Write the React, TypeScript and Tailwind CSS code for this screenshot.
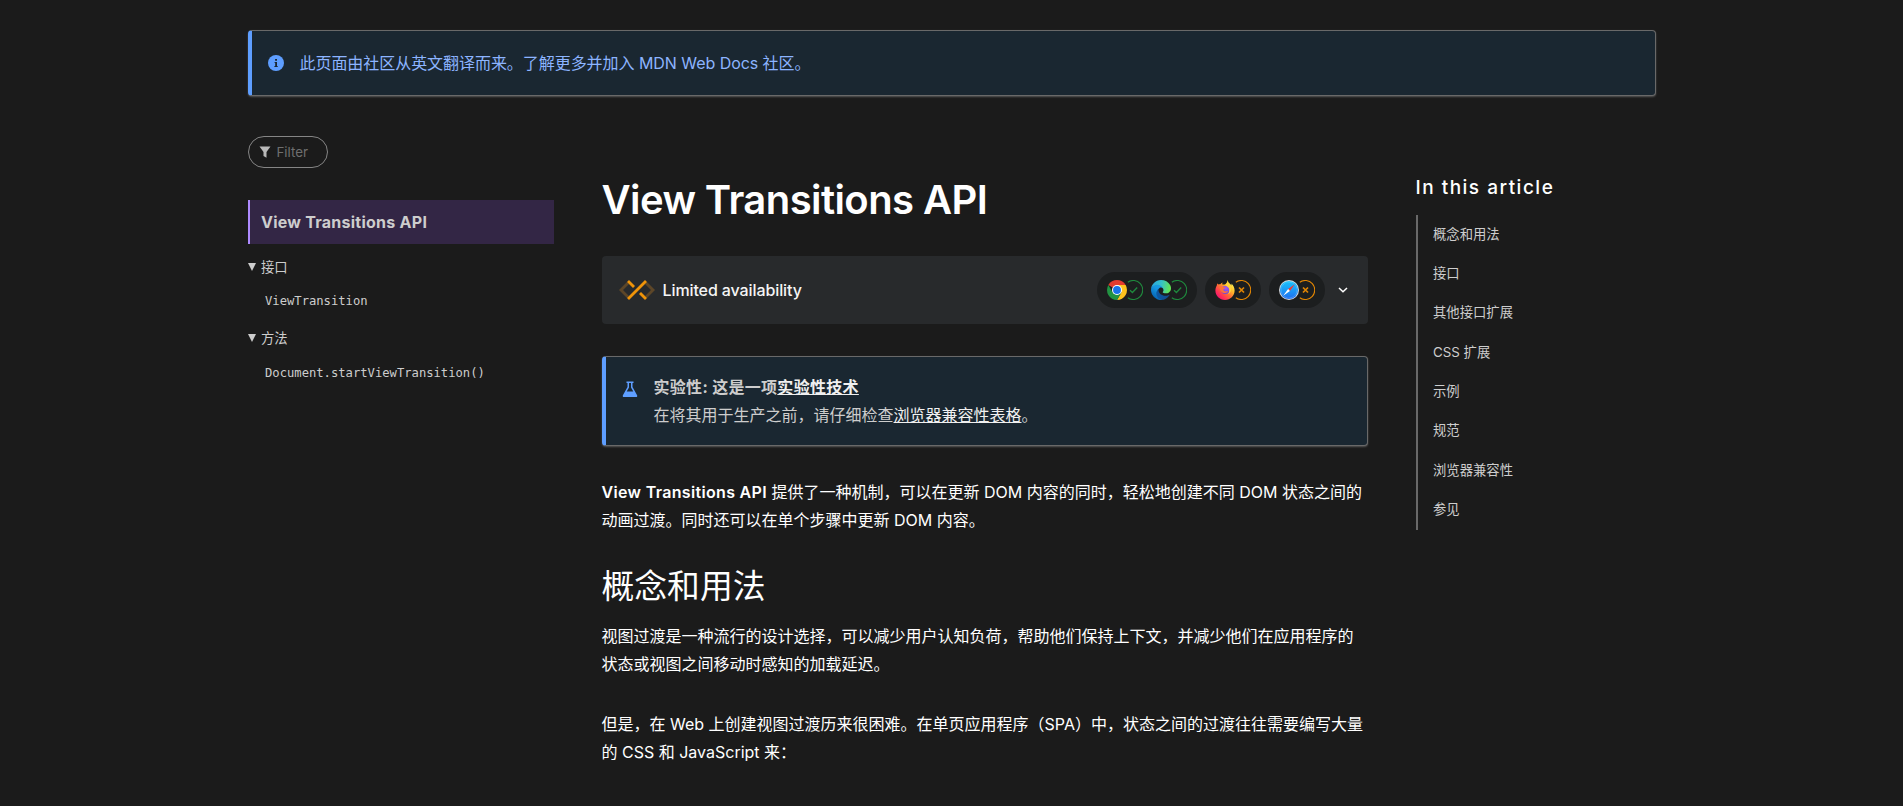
import React from "react";

const toc = ["概念和用法", "接口", "其他接口扩展", "CSS 扩展", "示例", "规范", "浏览器兼容性", "参见"];

function InfoIcon() {
  return (
    <svg viewBox="0 0 16 16" className="size-4 shrink-0">
      <circle cx="8" cy="8" r="8" fill="#5e9eff" />
      <path d="M7.1 4h1.9v1.8H7.1zM6.6 7h2.4v4h.7v1H6.4v-1h.8V8h-.6z" fill="#1a2731" />
    </svg>
  );
}

function FlaskIcon() {
  return (
    <svg viewBox="0 0 16 16" className="mt-2 size-4 shrink-0">
      <path
        fillRule="evenodd"
        fill="#5e9eff"
        d="M4.500 .500h7V2h-1v4l4.600 8.200c.5.9 0 1.800-1 1.800H1.900c-1 0-1.500-.9-1-1.800L5.500 6V2h-1zM7 2v4.400L4.700 10.500h6.600L9 6.400V2z"
      />
    </svg>
  );
}

function LimitedIcon() {
  return (
    <svg viewBox="0 0 540 300" className="h-5 w-9 shrink-0">
      <g fill="#5d4628">
        <path d="M420 30L540 150L420 270L390 240L480 150L390 60L420 30Z" />
        <path d="M120 30L150 60L60 150L150 240L120 270L0 150L120 30Z" />
      </g>
      <g fill="#f09409">
        <path d="M150 0L240 90L210 120L120 30L150 0Z" />
        <path d="M330 180L300 210L390 300L420 270L330 180Z" />
        <path d="M390 0L420 30L150 300L120 270L390 0Z" />
      </g>
    </svg>
  );
}

function ChromeIcon() {
  return (
    <svg viewBox="0 0 20 20" className="size-5">
      <path d="M10 10L1.340 5A10 10 0 0 1 18.660 5Z" fill="#e33b2e" />
      <path d="M10 5H18.660A10 10 0 0 1 10 20L14.330 12.500Z" fill="#fcc31e" />
      <path d="M1.340 5A10 10 0 0 0 10 20L14.330 12.500L10 14.500L5.670 12.500Z" fill="#229342" />
      <circle cx="10" cy="10" r="5" fill="#fff" />
      <circle cx="10" cy="10" r="3.950" fill="#1a73e8" />
    </svg>
  );
}

function EdgeIcon() {
  return (
    <svg viewBox="0 0 256 256" className="size-5">
      <defs>
        <linearGradient id="edge-dark" x1="60" y1="178" x2="236" y2="178" gradientUnits="userSpaceOnUse">
          <stop offset="0" stopColor="#0c59a4" />
          <stop offset="1" stopColor="#114a8b" />
        </linearGradient>
        <linearGradient id="edge-blue" x1="140" y1="80" x2="40" y2="220" gradientUnits="userSpaceOnUse">
          <stop offset="0" stopColor="#1b9de2" />
          <stop offset=".4" stopColor="#1595df" />
          <stop offset="1" stopColor="#0666b8" />
        </linearGradient>
        <linearGradient id="edge-green" x1="10" y1="60" x2="240" y2="110" gradientUnits="userSpaceOnUse">
          <stop offset="0" stopColor="#2aa7df" />
          <stop offset=".5" stopColor="#36c2c8" />
          <stop offset="1" stopColor="#62e556" />
        </linearGradient>
      </defs>
      <path fill="url(#edge-dark)" d="M231 190.500c-3.400 1.800-6.900 3.400-10.500 4.700a101.500 101.500 0 0 1-35.900 6.500c-47.300 0-88.500-32.500-88.500-74.300 .1-11.400 6.400-21.900 16.400-27.300-42.800 1.800-53.800 46.400-53.800 72.500 0 73.900 68.100 81.400 82.800 81.400 7.900 0 19.800-2.300 27-4.600l1.300-.4c27.600-9.500 51-28.100 66.600-52.800a4 4 0 0 0-5.400-5.700z" />
      <path fill="url(#edge-blue)" d="M105.700 241.400a79.200 79.200 0 0 1-22.700-21.300 80.700 80.700 0 0 1 29.500-120c3.100-1.500 8.500-4.100 15.600-4a32.400 32.400 0 0 1 25.700 13 31.900 31.900 0 0 1 6.300 18.700c0-.2 24.500-79.600-80-79.600-43.900 0-80 41.700-80 78.200a130 130 0 0 0 12.100 56 128 128 0 0 0 156.400 67 75.500 75.500 0 0 1-62.800-8z" />
      <path fill="url(#edge-green)" d="M152.300 148.900c-.8 1-3.300 2.500-3.300 5.700 0 2.600 1.700 5.100 4.700 7.200 14.400 10 41.500 8.700 41.600 8.700 10.700 0 21.100-2.900 30.300-8.300 18.800-11 30.400-31.200 30.400-53 .3-22.400-8-37.300-11.300-43.900C223.500 23.900 177.700 0 128 0 57.300 0 0 56.700 0 127.700c.5-36.400 36.600-65.800 80-65.800 3.500 0 23.500.3 42 10.100 16.300 8.600 24.900 18.900 30.800 29.200 6.200 10.700 7.300 24.100 7.300 29.500 0 5.300-2.700 13.300-7.800 18.200z" />
    </svg>
  );
}

function FirefoxIcon() {
  return (
    <svg viewBox="0 0 20 20" className="size-5">
      <defs>
        <linearGradient id="fx-body" x1="17" y1="3" x2="3" y2="18" gradientUnits="userSpaceOnUse">
          <stop offset="0" stopColor="#fff44f" />
          <stop offset=".3" stopColor="#ffb52a" />
          <stop offset=".55" stopColor="#ff6a36" />
          <stop offset=".8" stopColor="#ff3058" />
          <stop offset="1" stopColor="#f0146e" />
        </linearGradient>
        <radialGradient id="fx-core" cx="11" cy="8" r="6" gradientUnits="userSpaceOnUse">
          <stop offset="0" stopColor="#a45bf5" />
          <stop offset="1" stopColor="#6a45e0" />
        </radialGradient>
      </defs>
      <path
        fill="url(#fx-body)"
        d="M12.600 0c.3 2 1.400 3 2.800 4.200.5.4 1 .9 1.300 1.400-.1-.9-.3-1.500-.6-2.100 2.200 1.600 3.500 4.100 3.500 7.100 0 5.200-4.200 9.400-9.600 9.400S.400 15.800.400 10.600c0-2 .5-3.500 1.300-4.900.1-.9.400-1.700 1-2.500.1.500.3.900.6 1.200.6-.3 1.300-.3 2-.1C5.800 3.500 6.600 2.800 7.700 2.500 7.300 3 7.100 3.800 7.300 4.400c.8.1 1.500.1 2.300.1C11.600 3.700 12.400 2 12.600 0z"
      />
      <circle cx="10.300" cy="10" r="4.100" fill="url(#fx-core)" />
      <path d="M4.600 6.700c1.400-.9 3-.5 4 .5l1.900.2c-.2 1-1.400 1.400-2.100 1.800-.2 1.400.8 2.300 2.300 2.200 1-.1 1.600-.7 2.600-.4-.8 1.500-2.300 2.300-4 2.100-2.800-.3-4.600-2.800-4.700-6.400z" fill="#ff7139" />
      <path d="M12.600 0c.2 3-2 3.600-1.600 5.200.4 1.200 2.700 1.500 3.300 4.200.4 2.200-.5 3.900-1.700 4.800 2.800-.9 4.100-3.600 3.500-6.200-.5-2.500-3.300-3.600-3.500-8z" fill="#ffd43b" />
    </svg>
  );
}

function SafariIcon() {
  return (
    <svg viewBox="0 0 20 20" className="size-5">
      <defs>
        <linearGradient id="sf-dial" x1="10" y1="1" x2="10" y2="19" gradientUnits="userSpaceOnUse">
          <stop offset="0" stopColor="#19c3fb" />
          <stop offset="1" stopColor="#1e6ff0" />
        </linearGradient>
      </defs>
      <circle cx="10" cy="10" r="10" fill="#d8dade" />
      <circle cx="10" cy="10" r="9.100" fill="url(#sf-dial)" />
      <circle cx="10" cy="10" r="7.900" fill="none" stroke="#fff" strokeOpacity=".45" strokeWidth="1" strokeDasharray=".4 .8" />
      <path d="M15.800 4.200L9.100 9.100L10.900 10.900Z" fill="#f5382c" />
      <path d="M4.200 15.800L9.100 9.100L10.900 10.900Z" fill="#fff" />
    </svg>
  );
}

function Status({ ok }: { ok: boolean }) {
  return (
    <svg viewBox="0 0 16 20" className={ok ? "h-5 w-4 text-[#1f883d]" : "h-5 w-4 text-[#e08504]"} fill="none" stroke="currentColor">
      <path d="M0.800 2.200A9.500 9.500 0 1 1 0.800 17.800" strokeWidth="1.100" />
      {ok ? <path d="M3 10.200L5.400 12.500L10.200 7.400" strokeWidth="1.400" /> : <path d="M4 7.500L9 12.500M9 7.500L4 12.500" strokeWidth="1.700" />}
    </svg>
  );
}

function Support({ ok, children }: { ok: boolean; children: React.ReactNode }) {
  return (
    <span className="flex">
      {children}
      <Status ok={ok} />
    </span>
  );
}

function Group({ label, item, gap, itemGap }: { label: string; item: string; gap: string; itemGap: string }) {
  return (
    <div className={gap}>
      <div className="flex h-6 items-center text-[13.333px]">
        <svg viewBox="0 0 8 8" className="mr-[5.500px] size-2">
          <path d="M0 0H8L4 8Z" fill="#cdcdcd" />
        </svg>
        {label}
      </div>
      <div className={itemGap}>
        <div className="h-6 pl-[17.500px] font-['DejaVu_Sans_Mono',monospace] text-[12.180px] leading-6">{item}</div>
      </div>
    </div>
  );
}

export default function App() {
  return (
    <div className="h-[806px] overflow-hidden bg-[#1b1b1b] font-['Inter','Noto_Sans_CJK_SC',sans-serif] text-base leading-7 text-white" lang="zh-CN">
      <div className="mx-auto w-[1408px] pt-[30px]">
        <div className="flex h-[66px] items-center gap-4 rounded border border-l-4 border-[#696969] border-l-[#5e9eff] bg-[#1a2731] pl-4 text-[#8cb4ff] shadow-[0_1px_2px_rgba(255,255,255,0.25)]">
          <InfoIcon />
          <span className="tracking-[-0.05px]">此页面由社区从英文翻译而来。了解更多并加入 MDN Web Docs 社区。</span>
        </div>

        <div className="flex pt-10">
          <aside className="w-[306px] text-[#cdcdcd]">
            <div className="flex h-8 w-20 items-center rounded-full border border-[#858585] pl-2.5 text-[13.333px] text-[#6f6f6f]">
              <svg viewBox="0 0 12 12" className="mr-1.5 size-3">
                <path d="M.5.5h11L7.500 6v5.700L4.500 10V6z" fill="#b9b9b9" />
              </svg>
              Filter
            </div>
            <div className="mt-8 flex h-11 items-center border-l-2 border-[#ae8aff] bg-[#332645] pl-[11.500px] font-bold tracking-[0.250px]">View Transitions API</div>
            <Group label="接口" item="ViewTransition" gap="mt-[11px]" itemGap="pt-2.5" />
            <Group label="方法" item="Document.startViewTransition()" gap="mt-[13px]" itemGap="pt-[11px]" />
          </aside>

          <main className="ml-12 w-[766px]">
            <h1 className="mt-10 text-[40px] leading-[48px] font-semibold tracking-[-0.580px]">View Transitions API</h1>

            <div className="mt-8 flex h-[68px] items-center rounded bg-[#282a2c] pl-[17px]">
              <LimitedIcon />
              <span className="ml-2 font-medium tracking-[-0.100px] text-[#f5f5f5]">Limited availability</span>
              <div className="ml-auto flex gap-2">
                <div className="flex h-9 gap-2 rounded-full bg-[#1c1e1f] px-2.5 py-2">
                  <Support ok><ChromeIcon /></Support>
                  <Support ok><EdgeIcon /></Support>
                </div>
                <div className="flex h-9 rounded-full bg-[#1c1e1f] px-2.5 py-2">
                  <Support ok={false}><FirefoxIcon /></Support>
                </div>
                <div className="flex h-9 rounded-full bg-[#1c1e1f] px-2.5 py-2">
                  <Support ok={false}><SafariIcon /></Support>
                </div>
              </div>
              <svg viewBox="0 0 10 6" className="mr-5 ml-[13px] h-1.5 w-2.5" fill="none" stroke="#fff" strokeWidth="1.500">
                <path d="M1 1L5 4.700L9 1" />
              </svg>
            </div>

            <div className="mt-8 flex h-[90px] gap-4 rounded border border-l-4 border-[#696969] border-l-[#5e9eff] bg-[#1a2731] pt-4 pl-4 text-[#cdcdcd] shadow-[0_1px_2px_rgba(255,255,255,0.25)]">
              <FlaskIcon />
              <p>
                <strong className="font-bold tracking-[0.300px]">
                  实验性: 这是一项<a className="text-[#f0f0f0] underline">实验性技术</a>
                </strong>
                <br />
                在将其用于生产之前，请仔细检查<a className="text-[#f0f0f0] underline">浏览器兼容性表格</a>。
              </p>
            </div>

            <p className="mt-8">
              <strong className="font-semibold tracking-[0.330px]">View Transitions API</strong> 提供了一种机制，可以在更新 DOM 内容的同时，轻松地创建不同 DOM 状态之间的
              <br />
              动画过渡。同时还可以在单个步骤中更新 DOM 内容。
            </p>

            <h2 className="mt-8 text-[32.800px] leading-10">概念和用法</h2>
            <p className="mt-4">
              视图过渡是一种流行的设计选择，可以减少用户认知负荷，帮助他们保持上下文，并减少他们在应用程序的
              <br />
              状态或视图之间移动时感知的加载延迟。
            </p>
            <p className="mt-8">
              但是，在 Web 上创建视图过渡历来很困难。在单页应用程序（SPA）中，状态之间的过渡往往需要编写大量
              <br />的 CSS 和 JavaScript 来：
            </p>
            <ul className="mt-[34px] list-disc pl-[62px]">
              <li>处理新旧内容的加载和定位。</li>
            </ul>
          </main>

          <nav className="ml-12 w-[240px] pt-[38px]">
            <h2 className="text-[19px] leading-7 font-medium tracking-[1.500px]">In this article</h2>
            <ul className="mt-[13px] h-[315px] border-l-2 border-[#696969] pl-[15.500px] text-[13.333px] text-[#cdcdcd]">
              {toc.map((t) => (
                <li key={t} className="flex h-[39.300px] items-center pb-[1.500px]">{t}</li>
              ))}
            </ul>
          </nav>
        </div>
      </div>
    </div>
  );
}
